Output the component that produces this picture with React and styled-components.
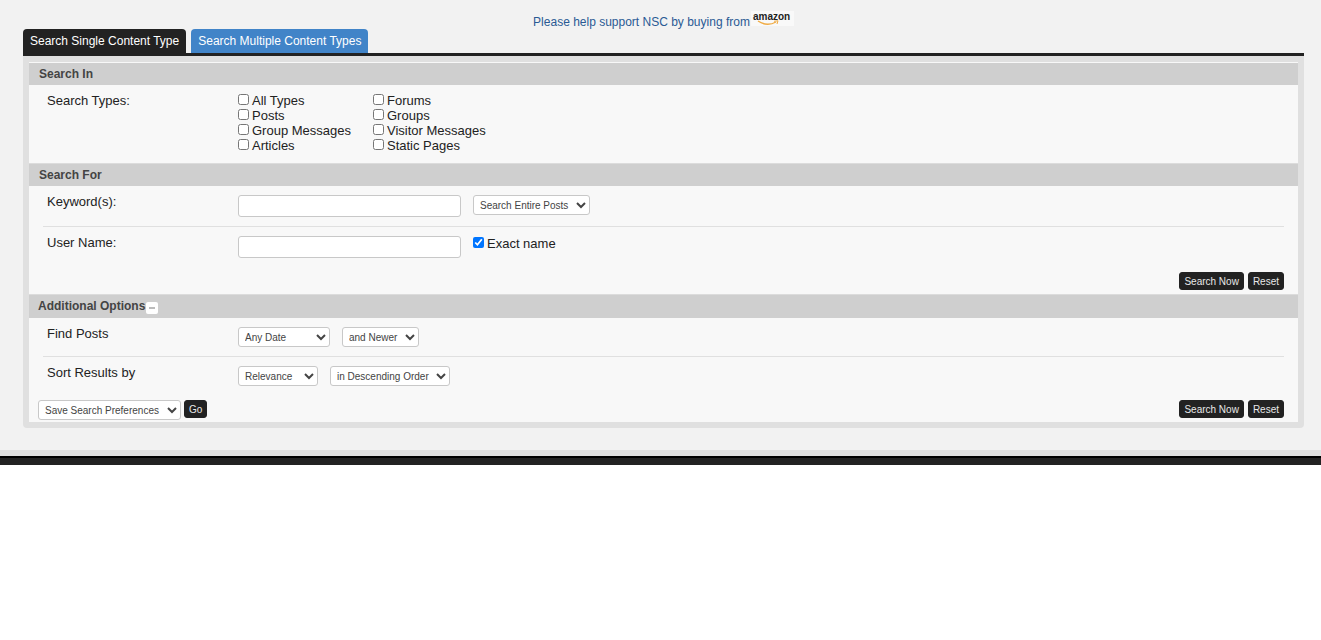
import React, { useState } from "react";
import styled, { createGlobalStyle } from "styled-components";

const GlobalStyle = createGlobalStyle`
  * {
    box-sizing: border-box;
  }
  body {
    margin: 0;
    background: #fff;
    color: #222;
    font: 13px/15px "Liberation Sans", Arial, sans-serif;
  }
`;

const Page = styled.main`
  display: flex;
  flex-direction: column;
  padding: 11px 17px 22px 23px;
  background: #f2f2f2;
  border-bottom: 6px solid #e0e0e0;
`;

const FooterBar = styled.footer`
  height: 9px;
  background: #222;
  border-top: 2px solid #000;
`;

const Support = styled.a`
  display: flex;
  align-self: center;
  gap: 1px;
  height: 18px;
  color: #2a5a94;
  font-size: 12px;
  line-height: 22px;
  text-decoration: none;
`;

const LogoBox = styled.svg`
  width: 43px;
  height: 15px;

  text {
    fill: #222;
    font: bold 10px "Liberation Sans", Arial, sans-serif;
  }
`;

const Tabs = styled.nav`
  display: flex;
  gap: 5px;
  border-bottom: 3px solid #222;
`;

const Tab = styled.button`
  height: 24px;
  padding: 0 7px;
  border: 0;
  border-radius: 4px 4px 0 0;
  background: ${(props) => (props.$active ? "#222" : "#4184c8")};
  color: #fff;
  font: inherit;
  font-size: 12px;
`;

const Panel = styled.form`
  border: 6px solid #e0e0e0;
  border-radius: 0 0 4px 4px;
  background: #f8f8f8;
`;

const SectionTitle = styled.h2`
  display: flex;
  align-items: center;
  gap: 1px;
  height: ${(props) => (props.$tall ? "24px" : "23px")};
  margin: 0;
  padding: 0 ${(props) => (props.$tall ? "9px" : "10px")};
  border-top: 1px solid ${(props) => (props.$first ? "#f8f8f8" : "#dcdcdc")};
  background: #cfcfcf;
  color: #444;
  font-size: 12px;
  line-height: 15px;
`;

const Collapse = styled.button`
  display: flex;
  align-items: center;
  justify-content: center;
  width: 12px;
  height: 12px;
  margin-top: 2px;
  padding: 0;
  border: 0;
  border-radius: 2px;
  background: #fff;

  &::before {
    content: "";
    width: 6px;
    height: 2px;
    background: #bbb;
  }
`;

const Row = styled.div`
  display: grid;
  grid-template-columns: 191px 1fr;
  margin: 0 14px;
  padding: 8px 0 9px 4px;

  & + & {
    border-top: 1px solid #e0e0e0;
  }
`;

const Fields = styled.div`
  display: flex;
  align-items: flex-start;
  gap: 12px;
  padding-top: 1px;
`;

const TypeGrid = styled.div`
  display: grid;
  grid-template-columns: 135px 135px;
  padding-bottom: 1px;
`;

const CheckLabel = styled.label`
  display: flex;
  align-items: flex-start;
  gap: 3px;

  input {
    width: 11px;
    height: 11px;
    margin: 1px 0 0;
  }
`;

const TextInput = styled.input`
  width: 223px;
  height: 22px;
  border: 1px solid #c8c8c8;
  border-radius: 3px;
  background: #fff;
  font: inherit;
`;

const Select = styled.select`
  width: ${(props) => props.$width}px;
  height: 20px;
  padding: 0 2px;
  border: 1px solid #c8c8c8;
  border-radius: 3px;
  background-color: #fff;
  color: #444;
  font: 10px "Liberation Sans", Arial, sans-serif;
`;

const Actions = styled.div`
  display: flex;
  align-items: center;
  gap: 3px;
  padding: 5px 14px 4px 9px;
`;

const BottomActions = styled(Actions)`
  align-items: flex-start;
  padding-bottom: 2px;
`;

const ActionGroup = styled.div`
  display: flex;
  gap: 4px;
  margin-left: auto;
`;

const Button = styled.button`
  height: 18px;
  padding: 0 4px;
  border: 1px solid #222;
  border-radius: 3px;
  background: #222;
  color: #e8e8e8;
  font: 10px "Liberation Sans", Arial, sans-serif;
`;

const contentTypes = [
  "All Types",
  "Forums",
  "Posts",
  "Groups",
  "Group Messages",
  "Visitor Messages",
  "Articles",
  "Static Pages",
];

function AmazonLogo() {
  return (
    <LogoBox viewBox="0 0 43 15" role="img" aria-label="amazon">
      <rect width="43" height="15" fill="#f9f9f9" />
      <text x="2" y="9">
        amazon
      </text>
      <path
        d="M7 10Q16 16 25 11"
        fill="none"
        stroke="#f0ab43"
        strokeWidth="1.4"
      />
      <path
        d="M23 10.3L27 9.8L26 13"
        fill="none"
        stroke="#f0ab43"
        strokeWidth="1"
      />
    </LogoBox>
  );
}

function SearchButtons() {
  return (
    <ActionGroup>
      <Button type="submit">Search Now</Button>
      <Button type="reset">Reset</Button>
    </ActionGroup>
  );
}

export default function App() {
  const [open, setOpen] = useState(true);

  return (
    <>
      <GlobalStyle />
      <Page>
        <Support href="#support">
          Please help support NSC by buying from
          <AmazonLogo />
        </Support>

        <Tabs>
          <Tab type="button" $active>
            Search Single Content Type
          </Tab>
          <Tab type="button">Search Multiple Content Types</Tab>
        </Tabs>

        <Panel onSubmit={(e) => e.preventDefault()}>
          <SectionTitle $first>Search In</SectionTitle>
          <Row>
            <span id="types-label">Search Types:</span>
            <TypeGrid role="group" aria-labelledby="types-label">
              {contentTypes.map((type) => (
                <CheckLabel key={type}>
                  <input type="checkbox" name="type" value={type} />
                  {type}
                </CheckLabel>
              ))}
            </TypeGrid>
          </Row>

          <SectionTitle>Search For</SectionTitle>
          <Row>
            <label htmlFor="keywords">Keyword(s):</label>
            <Fields>
              <TextInput id="keywords" type="text" />
              <Select $width={117} aria-label="Search in">
                <option>Search Entire Posts</option>
                <option>Search Titles Only</option>
              </Select>
            </Fields>
          </Row>
          <Row>
            <label htmlFor="username">User Name:</label>
            <Fields>
              <TextInput id="username" type="text" />
              <CheckLabel>
                <input type="checkbox" defaultChecked />
                Exact name
              </CheckLabel>
            </Fields>
          </Row>
          <Actions>
            <SearchButtons />
          </Actions>

          <SectionTitle $tall>
            Additional Options
            <Collapse
              type="button"
              aria-label="Toggle additional options"
              aria-expanded={open}
              onClick={() => setOpen(!open)}
            />
          </SectionTitle>
          {open && (
            <>
              <Row>
                <label htmlFor="date">Find Posts</label>
                <Fields>
                  <Select id="date" $width={92}>
                    <option>Any Date</option>
                    <option>Yesterday</option>
                  </Select>
                  <Select $width={77} aria-label="Date direction">
                    <option>and Newer</option>
                    <option>and Older</option>
                  </Select>
                </Fields>
              </Row>
              <Row>
                <label htmlFor="sort">Sort Results by</label>
                <Fields>
                  <Select id="sort" $width={80}>
                    <option>Relevance</option>
                    <option>Title</option>
                  </Select>
                  <Select $width={120} aria-label="Sort order">
                    <option>in Descending Order</option>
                    <option>in Ascending Order</option>
                  </Select>
                </Fields>
              </Row>
            </>
          )}
          <BottomActions>
            <Select $width={143} aria-label="Preferences">
              <option>Save Search Preferences</option>
              <option>Clear Search Preferences</option>
            </Select>
            <Button type="button">Go</Button>
            <SearchButtons />
          </BottomActions>
        </Panel>
      </Page>
      <FooterBar />
    </>
  );
}
